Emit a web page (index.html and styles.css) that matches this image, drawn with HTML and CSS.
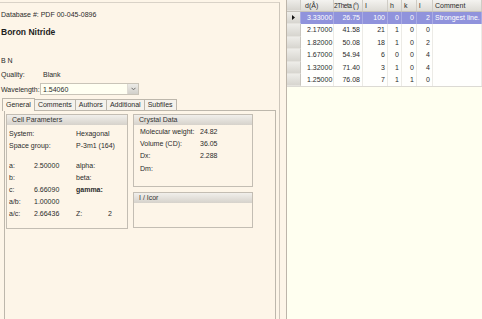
FILE: index.html
```html
<!DOCTYPE html>
<html lang="en">
<head>
  <meta charset="UTF-8" />
  <title>Boron Nitride - PDF 00-045-0896</title>
  <link rel="stylesheet" href="styles.css">
</head>
<body>

<div class="app">
  <!-- Card details -->
  <div class="left">
    <div class="info">
      <div class="db">Database #: PDF 00-045-0896</div>
      <div class="name">Boron Nitride</div>
      <div class="formula">B N</div>
      <div class="line quality"><span class="lbl">Quality:</span><span class="val">Blank</span></div>
      <div class="line wave">
        <span class="lbl">Wavelength:</span>
        <div class="combo">
          <span>1.54060</span>
          <span class="drop">
            <svg width="5" height="4" viewBox="0 0 5 4"><path d="M0.5 0.8 L2.5 2.8 L4.5 0.8" fill="none" stroke="#6b6b6b" stroke-width="1"/></svg>
          </span>
        </div>
      </div>
    </div>

    <div class="tabs">
      <div class="tab active">General</div>
      <div class="tab">Comments</div>
      <div class="tab">Authors</div>
      <div class="tab">Additional</div>
      <div class="tab">Subfiles</div>
    </div>

    <div class="page">
      <div class="group cell">
        <div class="ghead">Cell Parameters</div>
        <div class="cellgrid">
          <span class="wide">System:</span><span class="wide">Hexagonal</span>
          <span class="wide">Space group:</span><span class="wide">P-3m1 (164)</span>
          <span class="gap"></span>
          <span>a:</span><span>2.50000</span><span>alpha:</span><span></span>
          <span>b:</span><span></span><span>beta:</span><span></span>
          <span>c:</span><span>6.66090</span><span class="strong">gamma:</span><span></span>
          <span>a/b:</span><span>1.00000</span><span></span><span></span>
          <span>a/c:</span><span>2.66436</span><span>Z:</span><span>2</span>
        </div>
      </div>

      <div class="stack">
        <div class="group crystal">
          <div class="ghead">Crystal Data</div>
          <div class="pairs">
            <span>Molecular weight:</span><span>24.82</span>
            <span>Volume (CD):</span><span>36.05</span>
            <span>Dx:</span><span>2.288</span>
            <span>Dm:</span><span></span>
          </div>
        </div>
        <div class="group icor">
          <div class="ghead">I / Icor</div>
        </div>
      </div>
    </div>
  </div>

  <div class="split"></div>

  <!-- Peak list -->
  <div class="grid">
    <div class="grow head">
      <span class="ind"></span>
      <span class="c-d">d(Å)</span>
      <span class="c-tt">2Theta (°)</span>
      <span>I</span>
      <span>h</span>
      <span>k</span>
      <span>l</span>
      <span>Comment</span>
    </div>
    <div class="grow sel">
      <span class="ind"><svg width="3" height="5" viewBox="0 0 3 5"><path d="M0 0 L3 2.5 L0 5 Z" fill="#111"/></svg></span>
      <span class="c-d">3.33000</span><span class="num">26.75</span><span class="num">100</span>
      <span class="num">0</span><span class="num">0</span><span class="num">2</span><span class="c-com">Strongest line.</span>
    </div>
    <div class="grow">
      <span class="ind"></span>
      <span class="c-d">2.17000</span><span class="num">41.58</span><span class="num">21</span>
      <span class="num">1</span><span class="num">0</span><span class="num">0</span><span></span>
    </div>
    <div class="grow">
      <span class="ind"></span>
      <span class="c-d">1.82000</span><span class="num">50.08</span><span class="num">18</span>
      <span class="num">1</span><span class="num">0</span><span class="num">2</span><span></span>
    </div>
    <div class="grow">
      <span class="ind"></span>
      <span class="c-d">1.67000</span><span class="num">54.94</span><span class="num">6</span>
      <span class="num">0</span><span class="num">0</span><span class="num">4</span><span></span>
    </div>
    <div class="grow">
      <span class="ind"></span>
      <span class="c-d">1.32000</span><span class="num">71.40</span><span class="num">3</span>
      <span class="num">1</span><span class="num">0</span><span class="num">4</span><span></span>
    </div>
    <div class="grow last">
      <span class="ind"></span>
      <span class="c-d">1.25000</span><span class="num">76.08</span><span class="num">7</span>
      <span class="num">1</span><span class="num">1</span><span class="num">0</span><span></span>
    </div>
  </div>
</div>

</body>
</html>
```

FILE: styles.css
```css
body {
  margin: 0;
  font-family: "Liberation Sans", Arial, sans-serif;
  font-size: 7px;
  color: #2b2b2b;
  background-color: #fdf5e8;
}

.app {
  display: flex;
  width: 482px;
  height: 319px;
  overflow: hidden;
}

/* Left side: card details */
.left {
  flex: none;
  width: 279px;
  margin-top: 2px;
  border-top: 1px solid #d9d2c7;
  border-right: 1px solid #cdc6bb;
  background-color: #fdf5e8;
}

.info {
  padding-left: 1px;
}

.db {
  margin-top: 7px;
  height: 10px;
  line-height: 10px;
}

.name {
  margin-top: 6px;
  height: 12px;
  line-height: 12px;
  font-size: 8.5px;
  font-weight: bold;
  color: #1e1e1e;
}

.formula {
  margin-top: 18px;
  height: 10px;
  line-height: 10px;
}

.line {
  display: flex;
  align-items: center;
}

.lbl {
  width: 39px;
}

.quality {
  margin-top: 3px;
  height: 10px;
}

.quality .val {
  padding-left: 3px;
}

.wave {
  margin-top: 4px;
  height: 12px;
}

/* Wavelength combobox */
.combo {
  display: flex;
  align-items: center;
  justify-content: space-between;
  width: 95px;
  height: 10px;
  padding-left: 2px;
  border: 1px solid #c9c4b8;
  background-color: #fffff2;
}

.drop {
  display: flex;
  align-items: center;
  justify-content: center;
  width: 10px;
  height: 10px;
  background: linear-gradient(#ecebe7, #d2d0ca);
  border-left: 1px solid #dedbd4;
}

/* Tab strip */
.tabs {
  display: flex;
  align-items: flex-end;
  height: 12px;
  margin-top: 3px;
  padding-left: 2px;
}

.tab {
  height: 10px;
  line-height: 10px;
  padding: 0 3px;
  margin-right: -1px;
  border: 1px solid #bdb7ac;
  border-bottom: none;
  background-color: #f5f2ec;
}

.tab.active {
  position: relative;
  z-index: 1;
  height: 12px;
  line-height: 12px;
  margin-bottom: -1px;
  padding: 0 3px;
  background-color: #fdf5e8;
}

.page {
  display: flex;
  align-items: flex-start;
  gap: 5px;
  width: 268px;
  height: 220px;
  margin-left: 4px;
  padding: 3px 1px 0;
  border: 1px solid #bdb7ac;
  border-bottom: none;
}

/* Group boxes */
.group {
  border: 1px solid #c3bdb3;
  background-color: #fdf5e8;
}

.ghead {
  height: 10px;
  line-height: 10px;
  padding-left: 5px;
  background: linear-gradient(#f1efeb, #d6d2cb);
  color: #333;
}

.cell {
  width: 120px;
  height: 113px;
}

.cellgrid {
  display: grid;
  grid-template-columns: 25px 42px 32px auto;
  grid-template-rows: 12px 12px 8px repeat(5, 12px);
  align-items: center;
  padding: 2px 0 0 2px;
  white-space: nowrap;
}

.cellgrid .wide {
  grid-column: span 2;
}

.cellgrid .gap {
  grid-column: 1 / -1;
}

.cellgrid .strong {
  font-weight: bold;
}

.stack {
  display: flex;
  flex-direction: column;
  gap: 5px;
}

.crystal {
  width: 118px;
  height: 71px;
}

.pairs {
  display: grid;
  grid-template-columns: 60px auto;
  grid-auto-rows: 12.3px;
  align-items: center;
  padding-left: 6px;
}

.icor {
  width: 118px;
  height: 34px;
}

/* Splitter and data grid */
.split {
  flex: none;
  width: 6px;
}

.grid {
  flex: 1;
  border-left: 1px solid #bdb5aa;
  background-color: #fffff0;
}

.grow {
  display: grid;
  grid-template-columns: 14px 33px 29px 25px 14px 15px 16px 1fr;
  height: 12.4px;
  line-height: 12px;
  background-color: #fffffd;
  white-space: nowrap;
}

.grow span {
  overflow: hidden;
  border-right: 1px solid #ecebe6;
}

.grow .num {
  text-align: right;
  padding-right: 2px;
}

.grow .c-d {
  padding-left: 6px;
}

.grow .c-com {
  padding-left: 2px;
  overflow: visible;
}

.grow .ind {
  display: flex;
  align-items: center;
  justify-content: center;
  background: linear-gradient(#eeede9, #d7d5cf);
  border-right: 1px solid #c9c6bf;
  border-bottom: 1px solid #e5e3de;
}

.grow.head {
  height: 11px;
  line-height: 11px;
  background: linear-gradient(#f4f3f0, #dddbd5);
  border-bottom: 1px solid #c6c3bc;
}

.grow.head span {
  padding-left: 2px;
  border-right: 1px solid #cfccc5;
}

.grow.head .c-d {
  padding-left: 4px;
}

.grow.head .c-tt {
  overflow: visible;
  padding-left: 0;
  font-size: 6.5px;
  letter-spacing: -0.45px;
}

.grow.sel {
  background-color: #9093dc;
  color: #fff;
}

.grow.sel span {
  border-right-color: #a9abe4;
}

.grow.last {
  border-bottom: 1px solid #dcdad4;
}
```
